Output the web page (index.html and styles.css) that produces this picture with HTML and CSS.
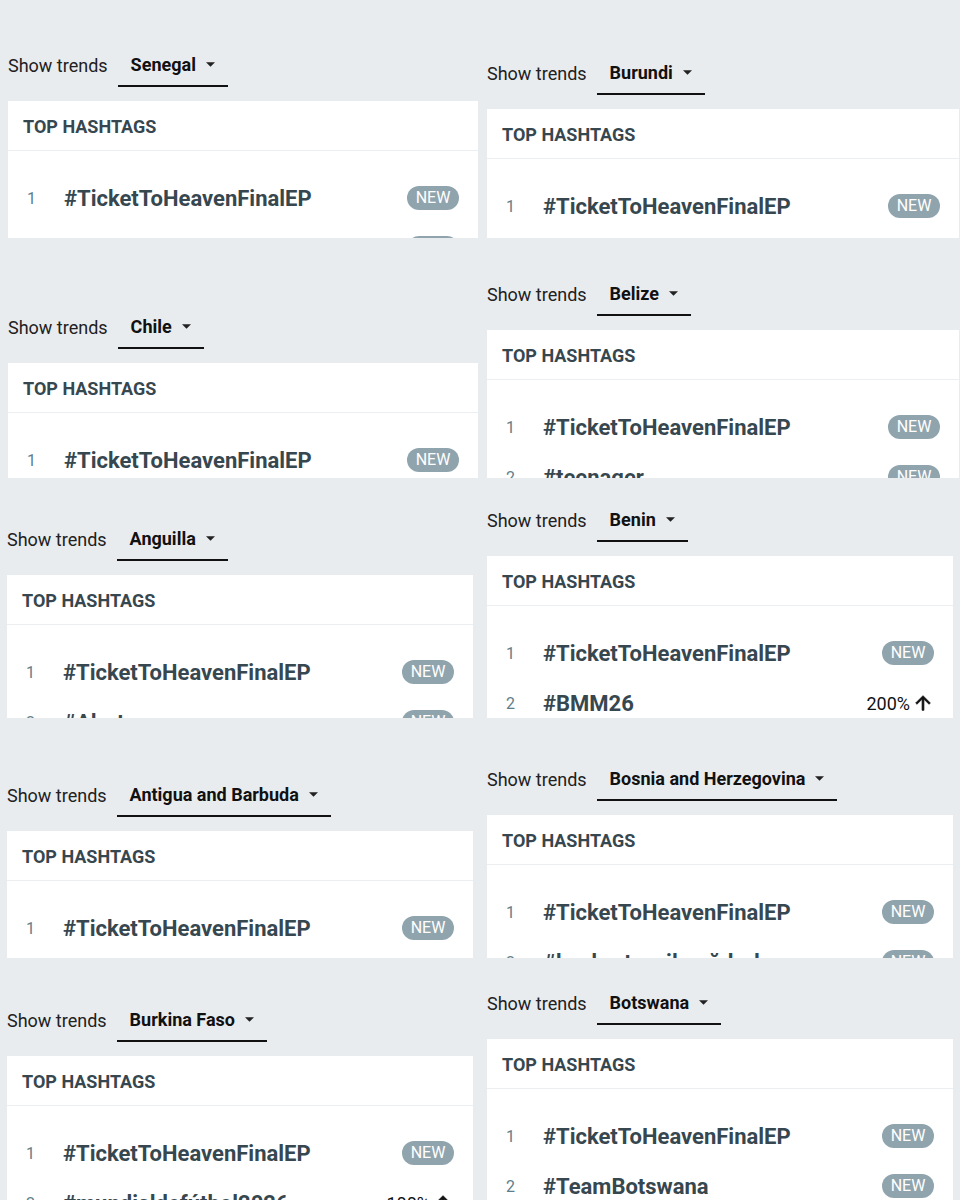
FILE: index.html
```html
<!DOCTYPE html>
<html lang="en">
  <head>
    <meta charset="UTF-8" />
    <meta name="viewport" content="width=device-width, initial-scale=1.0" />
    <title>Top Hashtags</title>
    <link rel="stylesheet" href="styles.css">
  </head>
  <body>
    <div class="board">
      <!-- left column -->
      <div class="column">
        <section class="tile tile-h238 pt-43 pl-8">
          <div class="trend-bar">
            <span class="trend-label">Show trends</span>
            <span class="country-select">Senegal <svg class="caret" viewBox="0 0 10 5"><path d="M0 0h10L5 5z"/></svg></span>
          </div>
          <div class="card w-470">
            <div class="card-title">TOP HASHTAGS</div>
            <ul class="tag-list">
              <li class="tag-row"><span class="rank">1</span><span class="tag">#TicketToHeavenFinalEP</span><span class="badge">NEW</span></li>
              <li class="tag-row"><span class="rank">2</span><span class="tag">#teenager</span><span class="badge">NEW</span></li>
            </ul>
          </div>
        </section>

        <section class="tile tile-h240 pt-67 pl-8">
          <div class="trend-bar">
            <span class="trend-label">Show trends</span>
            <span class="country-select">Chile <svg class="caret" viewBox="0 0 10 5"><path d="M0 0h10L5 5z"/></svg></span>
          </div>
          <div class="card w-470">
            <div class="card-title">TOP HASHTAGS</div>
            <ul class="tag-list">
              <li class="tag-row"><span class="rank">1</span><span class="tag">#TicketToHeavenFinalEP</span><span class="badge">NEW</span></li>
            </ul>
          </div>
        </section>

        <section class="tile tile-h240 pt-39 pl-7">
          <div class="trend-bar">
            <span class="trend-label">Show trends</span>
            <span class="country-select">Anguilla <svg class="caret" viewBox="0 0 10 5"><path d="M0 0h10L5 5z"/></svg></span>
          </div>
          <div class="card w-466">
            <div class="card-title">TOP HASHTAGS</div>
            <ul class="tag-list">
              <li class="tag-row"><span class="rank">1</span><span class="tag">#TicketToHeavenFinalEP</span><span class="badge">NEW</span></li>
              <li class="tag-row"><span class="rank">2</span><span class="tag">#Alert</span><span class="badge">NEW</span></li>
            </ul>
          </div>
        </section>

        <section class="tile tile-h240 pt-55 pl-7">
          <div class="trend-bar">
            <span class="trend-label">Show trends</span>
            <span class="country-select">Antigua and Barbuda <svg class="caret" viewBox="0 0 10 5"><path d="M0 0h10L5 5z"/></svg></span>
          </div>
          <div class="card w-466">
            <div class="card-title">TOP HASHTAGS</div>
            <ul class="tag-list">
              <li class="tag-row"><span class="rank">1</span><span class="tag">#TicketToHeavenFinalEP</span><span class="badge">NEW</span></li>
            </ul>
          </div>
        </section>

        <section class="tile tile-h242 pt-40 pl-7">
          <div class="trend-bar">
            <span class="trend-label">Show trends</span>
            <span class="country-select">Burkina Faso <svg class="caret" viewBox="0 0 10 5"><path d="M0 0h10L5 5z"/></svg></span>
          </div>
          <div class="card w-466">
            <div class="card-title">TOP HASHTAGS</div>
            <ul class="tag-list">
              <li class="tag-row"><span class="rank">1</span><span class="tag">#TicketToHeavenFinalEP</span><span class="badge">NEW</span></li>
              <li class="tag-row"><span class="rank">2</span><span class="tag">#mundialdefútbol2026</span><span class="growth">100% <svg class="arrow-up" viewBox="0 0 24 24"><path d="M4 12l1.41 1.41L11 7.83V20h2V7.83l5.58 5.59L20 12l-8-8-8 8z"/></svg></span></li>
            </ul>
          </div>
        </section>
      </div>

      <!-- right column -->
      <div class="column">
        <section class="tile tile-h238 pt-51 pl-7">
          <div class="trend-bar">
            <span class="trend-label">Show trends</span>
            <span class="country-select">Burundi <svg class="caret" viewBox="0 0 10 5"><path d="M0 0h10L5 5z"/></svg></span>
          </div>
          <div class="card w-472">
            <div class="card-title">TOP HASHTAGS</div>
            <ul class="tag-list">
              <li class="tag-row"><span class="rank">1</span><span class="tag">#TicketToHeavenFinalEP</span><span class="badge">NEW</span></li>
            </ul>
          </div>
        </section>

        <section class="tile tile-h240 pt-34 pl-7">
          <div class="trend-bar">
            <span class="trend-label">Show trends</span>
            <span class="country-select">Belize <svg class="caret" viewBox="0 0 10 5"><path d="M0 0h10L5 5z"/></svg></span>
          </div>
          <div class="card w-472">
            <div class="card-title">TOP HASHTAGS</div>
            <ul class="tag-list">
              <li class="tag-row"><span class="rank">1</span><span class="tag">#TicketToHeavenFinalEP</span><span class="badge">NEW</span></li>
              <li class="tag-row"><span class="rank">2</span><span class="tag">#teenager</span><span class="badge">NEW</span></li>
            </ul>
          </div>
        </section>

        <section class="tile tile-h240 pt-20 pl-7">
          <div class="trend-bar">
            <span class="trend-label">Show trends</span>
            <span class="country-select">Benin <svg class="caret" viewBox="0 0 10 5"><path d="M0 0h10L5 5z"/></svg></span>
          </div>
          <div class="card w-466">
            <div class="card-title">TOP HASHTAGS</div>
            <ul class="tag-list">
              <li class="tag-row"><span class="rank">1</span><span class="tag">#TicketToHeavenFinalEP</span><span class="badge">NEW</span></li>
              <li class="tag-row"><span class="rank">2</span><span class="tag">#BMM26</span><span class="growth">200% <svg class="arrow-up" viewBox="0 0 24 24"><path d="M4 12l1.41 1.41L11 7.83V20h2V7.83l5.58 5.59L20 12l-8-8-8 8z"/></svg></span></li>
            </ul>
          </div>
        </section>

        <section class="tile tile-h240 pt-39 pl-7">
          <div class="trend-bar">
            <span class="trend-label">Show trends</span>
            <span class="country-select">Bosnia and Herzegovina <svg class="caret" viewBox="0 0 10 5"><path d="M0 0h10L5 5z"/></svg></span>
          </div>
          <div class="card w-466">
            <div class="card-title">TOP HASHTAGS</div>
            <ul class="tag-list">
              <li class="tag-row"><span class="rank">1</span><span class="tag">#TicketToHeavenFinalEP</span><span class="badge">NEW</span></li>
              <li class="tag-row"><span class="rank">2</span><span class="tag">#başkurtsesilmağdurları</span><span class="badge">NEW</span></li>
            </ul>
          </div>
        </section>

        <section class="tile tile-h242 pt-23 pl-7">
          <div class="trend-bar">
            <span class="trend-label">Show trends</span>
            <span class="country-select">Botswana <svg class="caret" viewBox="0 0 10 5"><path d="M0 0h10L5 5z"/></svg></span>
          </div>
          <div class="card w-466">
            <div class="card-title">TOP HASHTAGS</div>
            <ul class="tag-list">
              <li class="tag-row"><span class="rank">1</span><span class="tag">#TicketToHeavenFinalEP</span><span class="badge">NEW</span></li>
              <li class="tag-row"><span class="rank">2</span><span class="tag">#TeamBotswana</span><span class="badge">NEW</span></li>
            </ul>
          </div>
        </section>
      </div>
    </div>
  </body>
</html>
```

FILE: styles.css
```css
body {
  margin: 0;
  font-family: Roboto, "Liberation Sans", sans-serif;
  background-color: #e9ecef;
}

.board {
  display: grid;
  grid-template-columns: 480px 480px;
}

.column {
  display: flex;
  flex-direction: column;
}

/* each tile is one cropped panel; the card runs to its bottom edge */
.tile {
  box-sizing: border-box;
  overflow: hidden;
  display: flex;
  flex-direction: column;
}

.tile-h238 { height: 238px; }
.tile-h240 { height: 240px; }
.tile-h242 { height: 242px; }

.pt-20 { padding-top: 20px; }
.pt-23 { padding-top: 23px; }
.pt-34 { padding-top: 34px; }
.pt-39 { padding-top: 39px; }
.pt-40 { padding-top: 40px; }
.pt-43 { padding-top: 43px; }
.pt-51 { padding-top: 51px; }
.pt-55 { padding-top: 55px; }
.pt-67 { padding-top: 67px; }

.pl-7 { padding-left: 7px; }
.pl-8 { padding-left: 8px; }

/* show trends / country picker */
.trend-bar {
  display: flex;
  align-items: center;
  flex-shrink: 0;
  height: 44px;
  gap: 10px;
}

.trend-label {
  font-size: 18px;
  color: #212121;
}

.country-select {
  box-sizing: border-box;
  display: flex;
  align-items: center;
  gap: 10px;
  height: 44px;
  padding: 0 13px;
  border-bottom: 2px solid #111;
  font-size: 18px;
  font-weight: 700;
  color: #111;
}

.caret {
  width: 9px;
  height: 5px;
  fill: #222;
}

/* card */
.card {
  flex: 1 0 auto;
  margin-top: 14px;
  background-color: white;
}

.w-466 { width: 466px; }
.w-470 { width: 470px; }
.w-472 { width: 472px; }

.card-title {
  box-sizing: border-box;
  height: 50px;
  display: flex;
  align-items: center;
  padding: 1px 0 0 15px;
  border-bottom: 1px solid #eceff1;
  font-size: 18px;
  font-weight: 700;
  color: #37474f;
}

.tag-list {
  list-style: none;
  margin: 0;
  padding: 22px 0 0;
}

.tag-row {
  display: flex;
  align-items: center;
  height: 50px;
  padding: 0 19px;
}

.rank {
  width: 37px;
  font-size: 16px;
  color: #607d8b;
}

.tag {
  flex: 1;
  font-size: 22px;
  font-weight: 700;
  color: #37474f;
}

.badge {
  width: 52px;
  height: 24px;
  line-height: 24px;
  border-radius: 12px;
  text-align: center;
  background-color: #90a4ae;
  color: white;
  font-size: 16px;
}

.growth {
  display: flex;
  align-items: center;
  gap: 2px;
  font-size: 18px;
  color: #111;
}

.arrow-up {
  width: 22px;
  height: 22px;
  fill: #111;
  stroke: #111;
  stroke-width: 0.8;
}
```
